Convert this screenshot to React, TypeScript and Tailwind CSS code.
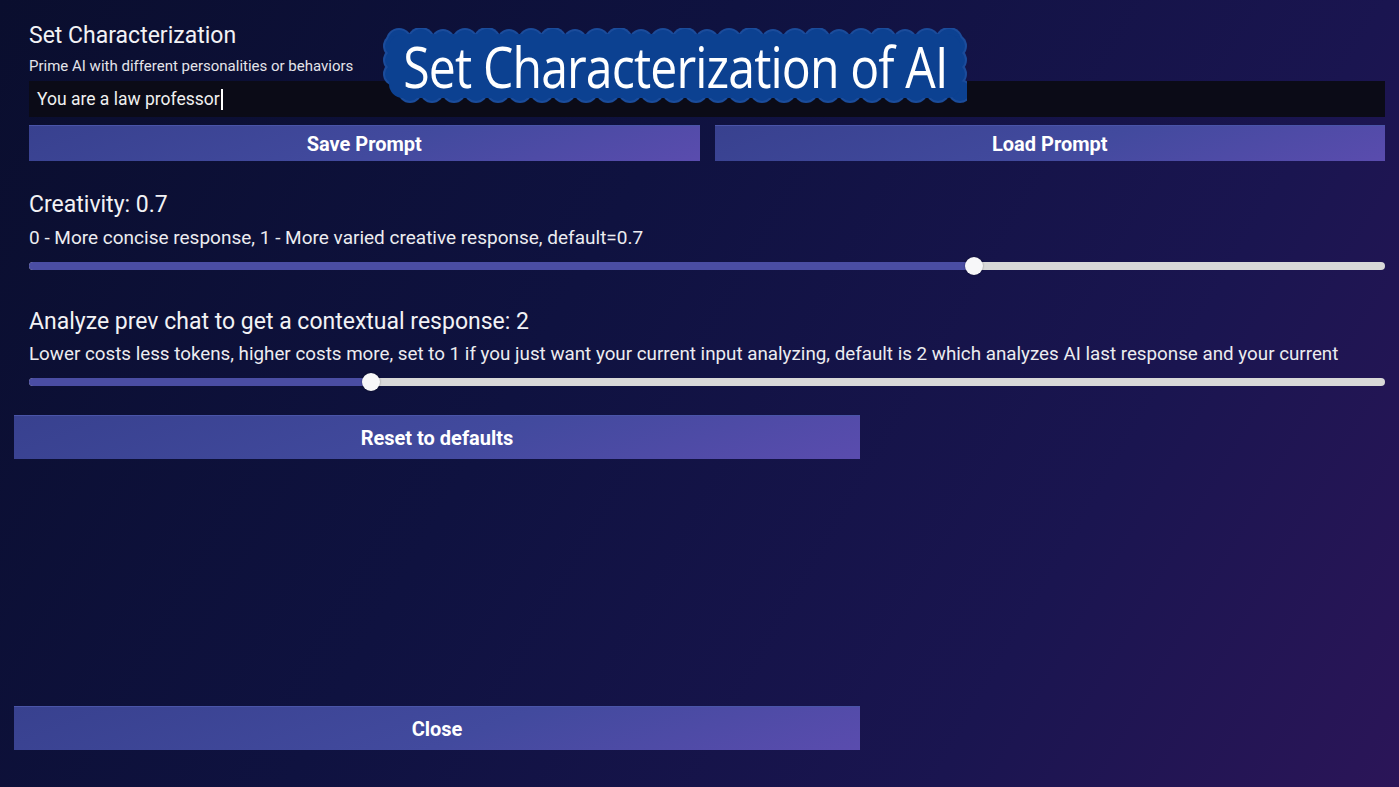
import React from "react";

function Slider({ pct }: { pct: number }) {
  return (
    <div className="relative h-[18px] w-full">
      <div className="absolute left-0 right-0 top-[5px] h-[8px] rounded-full bg-[#d8d8d8]" />
      <div
        className="absolute left-0 top-[5px] h-[8px] rounded-l-full bg-[#4a4da3]"
        style={{ width: `${pct}%` }}
      />
      <div
        className="absolute top-0 h-[18px] w-[18px] -translate-x-1/2 rounded-full bg-[#f7f7f9] shadow-[0_0_2px_rgba(0,0,0,0.4)]"
        style={{ left: `${pct}%` }}
      />
    </div>
  );
}

function Btn({ children, className = "" }: { children: React.ReactNode; className?: string }) {
  return (
    <button
      className={
        "flex items-center justify-center bg-[linear-gradient(160deg,#38418f_0%,#424a9e_55%,#5a4cae_100%)] font-[Roboto,'Liberation_Sans',sans-serif] text-[20px] font-bold text-white border-t border-[#4a55a8] " +
        className
      }
    >
      {children}
    </button>
  );
}

function Blob() {
  const w = 584;
  const h = 76;
  const circles: { cx: number; cy: number; rr: number }[] = [];
  for (let x = 16; x <= w - 16; x += 22) {
    circles.push({ cx: x, cy: 13, rr: 12 + ((x * 7) % 3) });
    circles.push({ cx: x + 11, cy: h - 13, rr: 12 + ((x * 3) % 3) });
  }
  for (let y = 18; y <= h - 18; y += 14) {
    circles.push({ cx: 12, cy: y, rr: 12 });
    circles.push({ cx: w - 12, cy: y, rr: 12 });
  }
  return (
    <svg width={w} height={h} viewBox={`0 0 ${w} ${h}`} className="absolute inset-0">
      <g fill="#1b4c9b">
        {circles.map((c, i) => (
          <circle key={"o" + i} cx={c.cx} cy={c.cy} r={c.rr} />
        ))}
      </g>
      <g fill="#0c4191">
        {circles.map((c, i) => (
          <circle key={"i" + i} cx={c.cx} cy={c.cy} r={c.rr - 2} />
        ))}
        <rect x={6} y={6} width={w - 12} height={h - 12} rx={14} />
      </g>
    </svg>
  );
}

export default function App() {
  return (
    <div className="relative flex h-[787px] w-full flex-col overflow-hidden bg-[linear-gradient(120deg,#0a0e2e_0%,#0f1240_40%,#1a1550_75%,#2b1558_100%)] px-[14px] pb-[37px] pt-[22px] font-[Roboto,'Liberation_Sans',sans-serif] text-white">
      <div className="flex flex-col pl-[15px]">
        <div className="text-[23px] leading-[27px] text-[#f2f2f5]">Set Characterization</div>
        <div className="mt-[8px] text-[15px] leading-[18px] text-[#e4e4ea]">
          Prime AI with different personalities or behaviors
        </div>
        <div className="mt-[6px] flex h-[36px] items-center bg-[#0b0b17] px-[8px] text-[17.5px] text-[#f0f0f0]">
          You are a law professor
          <span className="ml-[1px] inline-block h-[21px] w-[2px] bg-white" />
        </div>
        <div className="mt-[8px] flex gap-[15px]">
          <Btn className="h-[36px] flex-1">Save Prompt</Btn>
          <Btn className="h-[36px] flex-1">Load Prompt</Btn>
        </div>

        <div className="mt-[30px] text-[23px] leading-[27px] text-[#f2f2f5]">Creativity: 0.7</div>
        <div className="mt-[8px] text-[19px] leading-[24px] text-[#ececf0]">
          0 - More concise response, 1 - More varied creative response, default=0.7
        </div>
        <div className="mt-[7px]">
          <Slider pct={69.7} />
        </div>

        <div className="mt-[33px] text-[23px] leading-[27px] text-[#f2f2f5]">
          Analyze prev chat to get a contextual response: 2
        </div>
        <div className="mt-[7px] whitespace-nowrap text-[18.8px] leading-[24px] text-[#ececf0]">
          Lower costs less tokens, higher costs more, set to 1 if you just want your current input analyzing, default is 2 which analyzes AI last response and your current
        </div>
        <div className="mt-[7px]">
          <Slider pct={25.2} />
        </div>
      </div>

      <Btn className="mt-[24px] h-[44px] w-[846px]">Reset to defaults</Btn>

      <Btn className="mt-auto h-[44px] w-[846px]">Close</Btn>

      <div className="absolute left-[383px] top-[28px] h-[76px] w-[584px]">
        <Blob />
        <div className="relative flex h-full items-center justify-center">
          <span className="inline-block scale-x-[0.86] whitespace-nowrap font-['Open_Sans',sans-serif] text-[56px] leading-none tracking-[-1px] text-white">
            Set Characterization of AI
          </span>
        </div>
      </div>
    </div>
  );
}
